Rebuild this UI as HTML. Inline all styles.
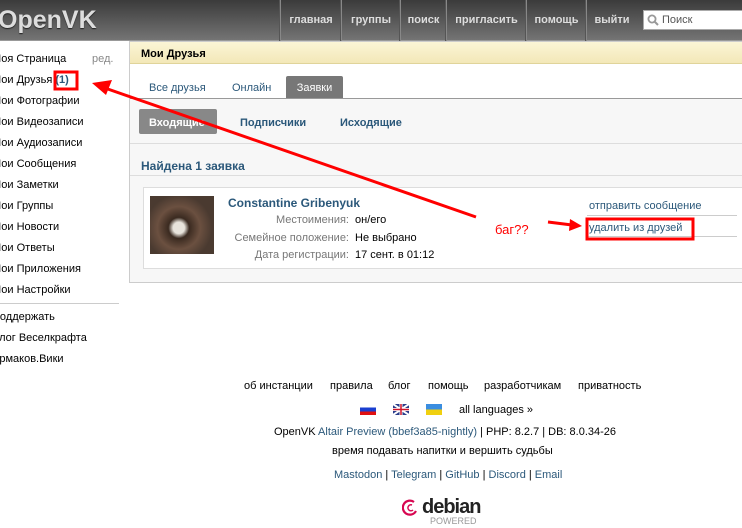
<!DOCTYPE html>
<html><head><meta charset="utf-8">
<style>
*{box-sizing:border-box}
body{margin:0;width:742px;height:528px;overflow:hidden;background:#fff;font-family:Tahoma,"Liberation Sans","DejaVu Sans",sans-serif;font-size:11px;color:#000;position:relative}
.top{position:absolute;left:0;top:0;width:742px;height:41px;background:linear-gradient(#3b3b3b,#747474);border-bottom:1px solid #999}
.logo{position:absolute;left:-2px;top:6px;font:bold 25px "Liberation Sans",sans-serif;color:#ddd;letter-spacing:0px;text-shadow:0 1px 1px #222}
.nav{position:absolute;top:0;height:41px;line-height:41px;color:#ddd;font-weight:bold;font-size:11px;text-align:center;border-left:1px solid #888;box-shadow:-1px 0 0 #555}
.search{position:absolute;left:643px;top:10px;width:105px;height:20px;background:#fff;border:1px solid #aaa;color:#555;font-size:11px;line-height:18px;padding-left:18px}
.lm{position:absolute;left:-8px;font-size:11px;color:#000}
.panel{position:absolute;left:129px;top:41px;width:620px;height:242px;border:1px solid #ccc;background:#f7f7f7}
.hdr{height:22px;background:linear-gradient(#fbf5d6,#f3e8b8);border-bottom:1px solid #e0d49a;font-weight:bold;line-height:24px;padding-left:11px}
.tabs{height:35px;background:#fff;border-bottom:1px solid #999;position:relative}
.tab{position:absolute;top:12px;color:#2b587a;font-size:11px;height:22px;line-height:25px}
.sub{position:absolute;font-weight:bold;color:#2b587a;font-size:11px}
.lbl{position:absolute;color:#777;text-align:right;width:150px}
.val{position:absolute;color:#000}
.ft{position:absolute;font-size:11px;color:#000;white-space:nowrap}
.a{color:#2b587a}
</style></head><body>
<div class="top">
 <div class="logo">OpenVK</div>
 <div class="nav" style="left:280px;width:61px">главная</div>
 <div class="nav" style="left:341px;width:59px">группы</div>
 <div class="nav" style="left:400px;width:46px">поиск</div>
 <div class="nav" style="left:446px;width:80px">пригласить</div>
 <div class="nav" style="left:526px;width:60px">помощь</div>
 <div class="nav" style="left:586px;width:51px">выйти</div>
 <div class="search"><svg style="position:absolute;left:3px;top:3px" width="12" height="12"><circle cx="5" cy="5" r="3.6" fill="none" stroke="#999" stroke-width="1.8"/><line x1="7.5" y1="7.5" x2="11" y2="11" stroke="#999" stroke-width="2"/></svg>Поиск</div>
</div>

<div class="lm" style="top:53px">Моя Страница</div><div class="lm" style="top:53px;left:92px;color:#888">ред.</div>
<div class="lm" style="top:74px">Мои Друзья <span class="a" style="font-weight:bold">(1)</span></div>
<div class="lm" style="top:95px">Мои Фотографии</div>
<div class="lm" style="top:116px">Мои Видеозаписи</div>
<div class="lm" style="top:137px">Мои Аудиозаписи</div>
<div class="lm" style="top:158px">Мои Сообщения</div>
<div class="lm" style="top:179px">Мои Заметки</div>
<div class="lm" style="top:200px">Мои Группы</div>
<div class="lm" style="top:221px">Мои Новости</div>
<div class="lm" style="top:242px">Мои Ответы</div>
<div class="lm" style="top:263px">Мои Приложения</div>
<div class="lm" style="top:284px">Мои Настройки</div>
<div style="position:absolute;left:0;top:303px;width:119px;height:1px;background:#ccc"></div>
<div class="lm" style="top:311px">Поддержать</div>
<div class="lm" style="top:332px">Блог Веселкрафта</div>
<div class="lm" style="top:353px">Ермаков.Вики</div>

<div class="panel">
 <div class="hdr">Мои Друзья</div>
 <div class="tabs">
  <div class="tab" style="left:19px">Все друзья</div>
  <div class="tab" style="left:102px">Онлайн</div>
  <div class="tab" style="left:156px;width:57px;background:#777;color:#fff;text-align:center;border-radius:2px 2px 0 0">Заявки</div>
 </div>
 <div style="position:absolute;left:9px;top:67px;width:78px;height:25px;background:#888;border-radius:2px"></div>
 <div class="sub" style="left:19px;top:75px;color:#fff">Входящие</div>
 <div class="sub" style="left:110px;top:75px">Подписчики</div>
 <div class="sub" style="left:210px;top:75px">Исходящие</div>
 <div style="position:absolute;left:0;top:101px;width:620px;height:1px;background:#ddd"></div>
 <div class="sub" style="left:11px;top:117px;font-size:12px">Найдена 1 заявка</div>
 <div style="position:absolute;left:0;top:133px;width:620px;height:1px;background:#ddd"></div>
 <div style="position:absolute;left:13px;top:145px;width:610px;height:82px;background:#fff;border:1px solid #ddd"></div>
 <div style="position:absolute;left:20px;top:154px;width:64px;height:58px;background:radial-gradient(circle at 45% 55%,#e8e4dc 0 12%,#3a2a20 22%,#6b5040 45%,#4a3a30 70%),#5a4a3a"></div>
 <div class="sub" style="left:98px;top:154px;font-size:12px">Constantine Gribenyuk</div>
 <div class="lbl" style="left:69px;top:172px">Местоимения:</div><div class="val" style="left:225px;top:172px">он/его</div>
 <div class="lbl" style="left:69px;top:190px">Семейное положение:</div><div class="val" style="left:225px;top:190px">Не выбрано</div>
 <div class="lbl" style="left:69px;top:207px">Дата регистрации:</div><div class="val" style="left:225px;top:207px">17 сент. в 01:12</div>
 <div class="a" style="position:absolute;left:459px;top:158px">отправить сообщение</div>
 <div style="position:absolute;left:457px;top:173px;width:150px;height:1px;background:#ccc"></div>
 <div class="a" style="position:absolute;left:459px;top:180px">удалить из друзей</div>
 <div style="position:absolute;left:457px;top:194px;width:150px;height:1px;background:#ccc"></div>
</div>

<div class="ft" style="left:244px;top:380px">об инстанции</div>
<div class="ft" style="left:330px;top:380px">правила</div>
<div class="ft" style="left:388px;top:380px">блог</div>
<div class="ft" style="left:428px;top:380px">помощь</div>
<div class="ft" style="left:484px;top:380px">разработчикам</div>
<div class="ft" style="left:578px;top:380px">приватность</div>
<div style="position:absolute;left:360px;top:404px;width:16px;height:11px;background:linear-gradient(#fff 33%,#1a3fd0 33% 66%,#e01010 66%)"></div>
<div style="position:absolute;left:393px;top:404px;width:16px;height:11px;background:#2a3c8a"><svg width="16" height="11"><path d="M0 0L16 11M16 0L0 11" stroke="#fff" stroke-width="2"/><path d="M8 0V11M0 5.5H16" stroke="#fff" stroke-width="3"/><path d="M8 0V11M0 5.5H16" stroke="#d0142a" stroke-width="1.5"/></svg></div>
<div style="position:absolute;left:426px;top:404px;width:16px;height:11px;background:linear-gradient(#3a8de0 50%,#f0d010 50%)"></div>
<div class="ft" style="left:459px;top:404px">all languages »</div>
<div class="ft" style="left:274px;top:426px">OpenVK <span class="a">Altair Preview (bbef3a85-nightly)</span> | PHP: 8.2.7 | DB: 8.0.34-26</div>
<div class="ft" style="left:332px;top:445px">время подавать напитки и вершить судьбы</div>
<div class="ft a" style="left:334px;top:469px">Mastodon <span style="color:#000">|</span> Telegram <span style="color:#000">|</span> GitHub <span style="color:#000">|</span> Discord <span style="color:#000">|</span> Email</div>
<svg style="position:absolute;left:402px;top:494px" width="90" height="32"><path d="M12 8a7 7 0 1 0 2 9" fill="none" stroke="#d70751" stroke-width="2.2"/><path d="M10 11a3 3 0 1 0 1 5" fill="none" stroke="#d70751" stroke-width="1.5"/><text x="20" y="19" font-family="Liberation Sans,sans-serif" font-size="20" font-weight="bold" fill="#222" letter-spacing="-1">debian</text><text x="28" y="30" font-family="Liberation Sans,sans-serif" font-size="9" fill="#999">POWERED</text></svg>

<svg style="position:absolute;left:0;top:0" width="742" height="528">
 <g stroke="#f00" fill="none" stroke-width="3">
  <rect x="55" y="72" width="22" height="17"/>
  <rect x="587" y="219" width="106" height="20"/>
  <line x1="476" y1="217" x2="102" y2="87"/>
  <line x1="548" y1="222" x2="572" y2="225"/>
 </g>
 <polygon points="92,83 112,80 106,95" fill="#f00"/>
 <polygon points="582,226 570,219 569,231" fill="#f00"/>
 <text x="495" y="234" font-family="Liberation Sans,sans-serif" font-size="13" fill="#f00">баг??</text>
</svg>
</body></html>
